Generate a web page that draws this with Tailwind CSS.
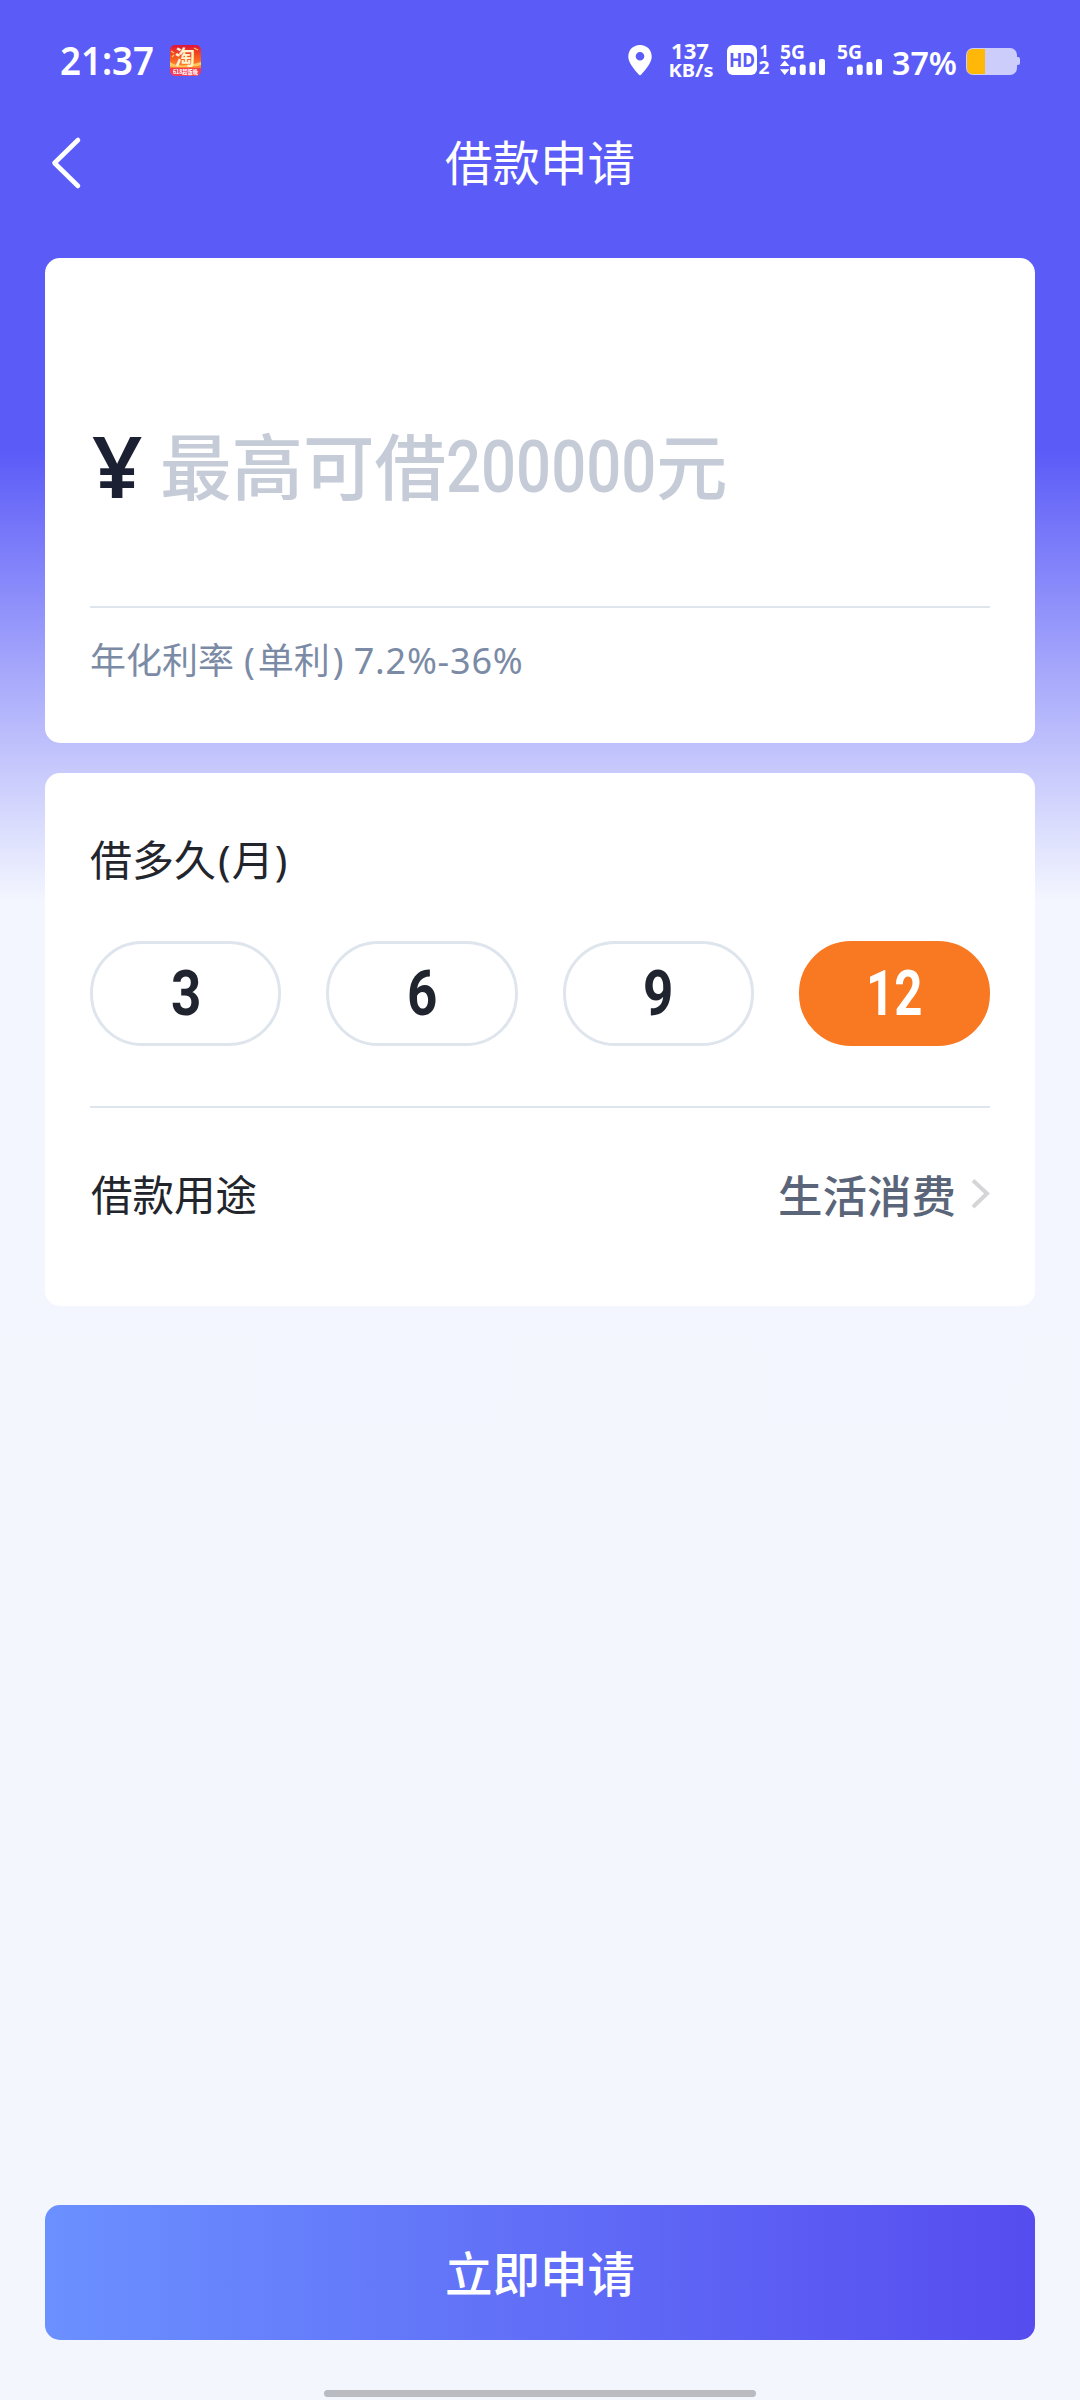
<!DOCTYPE html>
<html lang="zh-CN">
<head>
<meta charset="utf-8">
<title>借款申请</title>
<script src="https://cdn.jsdelivr.net/npm/@tailwindcss/browser@4"></script>
</head>
<body class="bg-[#f3f6fd]">
<div class="flex h-[2400px] w-[1080px] flex-col overflow-hidden bg-[linear-gradient(180deg,#5b5bf8_0px,#5b5bf8_450px,#f3f6fe_900px,#f3f6fd_100%)] font-['Noto_Sans','Noto_Sans_CJK_SC',sans-serif]">

  <!-- Status bar -->
  <div class="flex h-[120px] shrink-0 items-center justify-between pr-[60px] pl-[60px] text-white">
    <div class="flex items-center gap-4">
      <span class="w-[94px] origin-left scale-x-[0.94] text-[39px] leading-[54px] font-semibold whitespace-nowrap">21:37</span>
      <svg class="h-[31px] w-[31px] overflow-visible" viewBox="0 0 31 31">
        <defs><linearGradient id="tb" x1="0" y1="0" x2="0" y2="1"><stop offset="0" stop-color="#e0143c"/><stop offset=".35" stop-color="#f4511e"/><stop offset=".72" stop-color="#ff8a2b"/><stop offset=".76" stop-color="#f2364f"/><stop offset="1" stop-color="#f0405c"/></linearGradient></defs>
        <rect width="31" height="31" rx="5" fill="url(#tb)"/>
        <path d="M0 17Q6 21 14 20.500T31 17V20Q22 23 0 21.500Z" fill="#ffc85f"/>
        <path d="M1 6l3 2M24 3l4 2M2 12l2-2" stroke="#ffc85f" stroke-width="1.300"/>
        <text x="5" y="19.500" font-family="Noto Sans CJK SC" font-size="20" font-weight="700" fill="#fff3d0">淘</text>
        <text x="3" y="29" font-family="Noto Sans CJK SC" font-size="6" font-weight="700" fill="#fff" textLength="25" lengthAdjust="spacingAndGlyphs">618超饭晚</text>
      </svg>
    </div>
    <svg class="h-[60px] w-[394px] overflow-visible" viewBox="626 30 394 60" fill="#fff" font-family="Noto Sans, sans-serif" font-weight="700">
      <path fill-rule="evenodd" d="M640 45C633 45 628.300 50 628.300 56.500C628.300 63 634 69 638.500 74.300Q640 76 641.500 74.300C646 69 651.700 63 651.700 56.500C651.700 50 647 45 640 45ZM640 52a4.300 4.300 0 1 1 0 8.600a4.300 4.300 0 1 1 0-8.600Z"/>
      <text x="671" y="58.500" font-size="22" textLength="38" lengthAdjust="spacingAndGlyphs">137</text>
      <text x="668.500" y="76.500" font-size="18" textLength="45" lengthAdjust="spacingAndGlyphs">KB/s</text>
      <rect x="727" y="45" width="30" height="30" rx="6"/>
      <text x="729" y="67" font-size="19.500" fill="#5b5bf8" textLength="26" lengthAdjust="spacingAndGlyphs">HD</text>
      <text x="759.500" y="56.500" font-size="16">1</text>
      <text x="758.500" y="74" font-size="17" textLength="11" lengthAdjust="spacingAndGlyphs">2</text>
      <text x="780" y="59" font-size="19.500" textLength="25" lengthAdjust="spacingAndGlyphs">5G</text>
      <path d="M784.700 60.500L789.500 66H780ZM784.700 75L789.500 69.200H780Z"/>
      <rect x="790" y="66.500" width="6" height="8.500" rx="2"/><rect x="799.700" y="64.500" width="6" height="10.500" rx="2"/><rect x="809.500" y="62" width="6" height="13" rx="2"/><rect x="819" y="59" width="6" height="16" rx="2"/>
      <text x="837" y="59" font-size="19.500" textLength="25" lengthAdjust="spacingAndGlyphs">5G</text>
      <rect x="847" y="66.500" width="6" height="8.500" rx="2"/><rect x="856.700" y="64.500" width="6" height="10.500" rx="2"/><rect x="866.500" y="62" width="6" height="13" rx="2"/><rect x="876" y="59" width="6" height="16" rx="2"/>
      <text x="892" y="74.500" font-size="32.500" font-weight="600" textLength="65" lengthAdjust="spacingAndGlyphs">37%</text>
      <rect x="966" y="48" width="51" height="27" rx="7" fill="#cdcdfc"/>
      <path d="M1016.500 57H1018Q1020 57 1020 59V63Q1020 65 1018 65H1016.500Z" fill="#cdcdfc"/>
      <path d="M985 49H973Q967 49 967 55V68Q967 74 973 74H985Z" fill="#ffb808"/>
    </svg>
  </div>

  <!-- Title bar -->
  <header class="grid h-[86px] shrink-0 grid-cols-[1fr_auto_1fr] items-center px-[48px] text-white">
    <svg class="h-[54px] w-[36px]" viewBox="0 0 36 54" fill="none" stroke="#fff" stroke-width="4.600" stroke-linecap="round" stroke-linejoin="round"><path d="M30 4L6.500 27L30 50"/></svg>
    <h1 class="text-[47.500px] leading-[60px]">借款申请</h1>
    <span></span>
  </header>

  <main class="mt-[52px] flex flex-col gap-[30px] px-[45px]">
    <!-- Amount -->
    <section class="flex h-[485px] flex-col rounded-[15px] bg-white px-[45px]">
      <div class="flex h-[348px] items-end pb-[89px]">
        <span class="w-[70px] pl-[2px] text-[84px] leading-[102px] font-semibold text-[#1c2033]"><span class="inline-block origin-left scale-x-[1.05]">¥</span></span>
        <div class="flex h-[100px] items-center text-[71.500px] leading-[100px] font-medium whitespace-nowrap text-[#c5ccd8]">
          <span>最高可借</span>
          <span class="inline-block w-[210px] origin-left scale-x-[0.845] font-[Roboto] text-[73px]">200000</span>
          <span>元</span>
        </div>
      </div>
      <div class="h-[2px] shrink-0 bg-[#dfe5ed]"></div>
      <p class="mt-[27px] flex text-[36px] leading-[52px] whitespace-nowrap text-[#7b8ba5]">
        <span>年化利率</span><span class="ml-[10px]">(</span><span class="ml-[3px]">单利</span><span class="ml-[3px]">)</span><span class="ml-[10px] tracking-[0.8px]">7.2%-36%</span>
      </p>
    </section>

    <!-- Term and purpose -->
    <section class="flex h-[533px] flex-col rounded-[15px] bg-white px-[45px]">
      <h2 class="mt-[57px] flex text-[42px] leading-[60px] text-[#22252c]"><span>借多久</span><span class="ml-[2px]">(</span><span class="ml-[1px]">月</span><span class="ml-[1px]">)</span></h2>
      <div class="mt-[51px] grid grid-cols-4 gap-[45px] font-[Roboto] text-[63px] leading-[97px] font-bold text-[#20242f]">
        <button class="h-[105px] rounded-[52px] border-[3px] border-[#dfe5ed]"><span class="inline-block scale-x-[0.84]">3</span></button>
        <button class="h-[105px] rounded-[52px] border-[3px] border-[#dfe5ed]"><span class="inline-block scale-x-[0.84]">6</span></button>
        <button class="h-[105px] rounded-[52px] border-[3px] border-[#dfe5ed]"><span class="inline-block scale-x-[0.84]">9</span></button>
        <button class="h-[105px] rounded-[52px] border-[3px] border-[#f97822] bg-[#f97822] text-white"><span class="inline-block scale-x-[0.78]">12</span></button>
      </div>
      <div class="mt-[60px] h-[2px] shrink-0 bg-[#dfe5ed]"></div>
      <div class="flex h-[174px] items-center justify-between">
        <span class="pl-[1px] text-[41.500px] leading-[60px] text-[#22252c]">借款用途</span>
        <div class="flex items-center gap-[14px]">
          <span class="pt-[1px] text-[44.500px] leading-[60px] font-medium text-[#5a6579]">生活消费</span>
          <svg class="h-[34px] w-[20px]" viewBox="0 0 20 34" fill="none" stroke="#d5d5d8" stroke-width="4"><path d="M3 2.500L17 15.500L3 29"/></svg>
        </div>
      </div>
    </section>
  </main>

  <!-- Submit -->
  <footer class="mt-auto flex flex-col items-center px-[45px] pb-[3px]">
    <button class="h-[135px] w-full rounded-[15px] bg-[linear-gradient(90deg,#6b90ff,#564cef)] pt-[2px] text-[47.500px] font-medium text-white">立即申请</button>
    <div class="mt-[50px] h-[7px] w-[432px] rounded-full bg-[#b9bbc0]"></div>
  </footer>
</div>
</body>
</html>
